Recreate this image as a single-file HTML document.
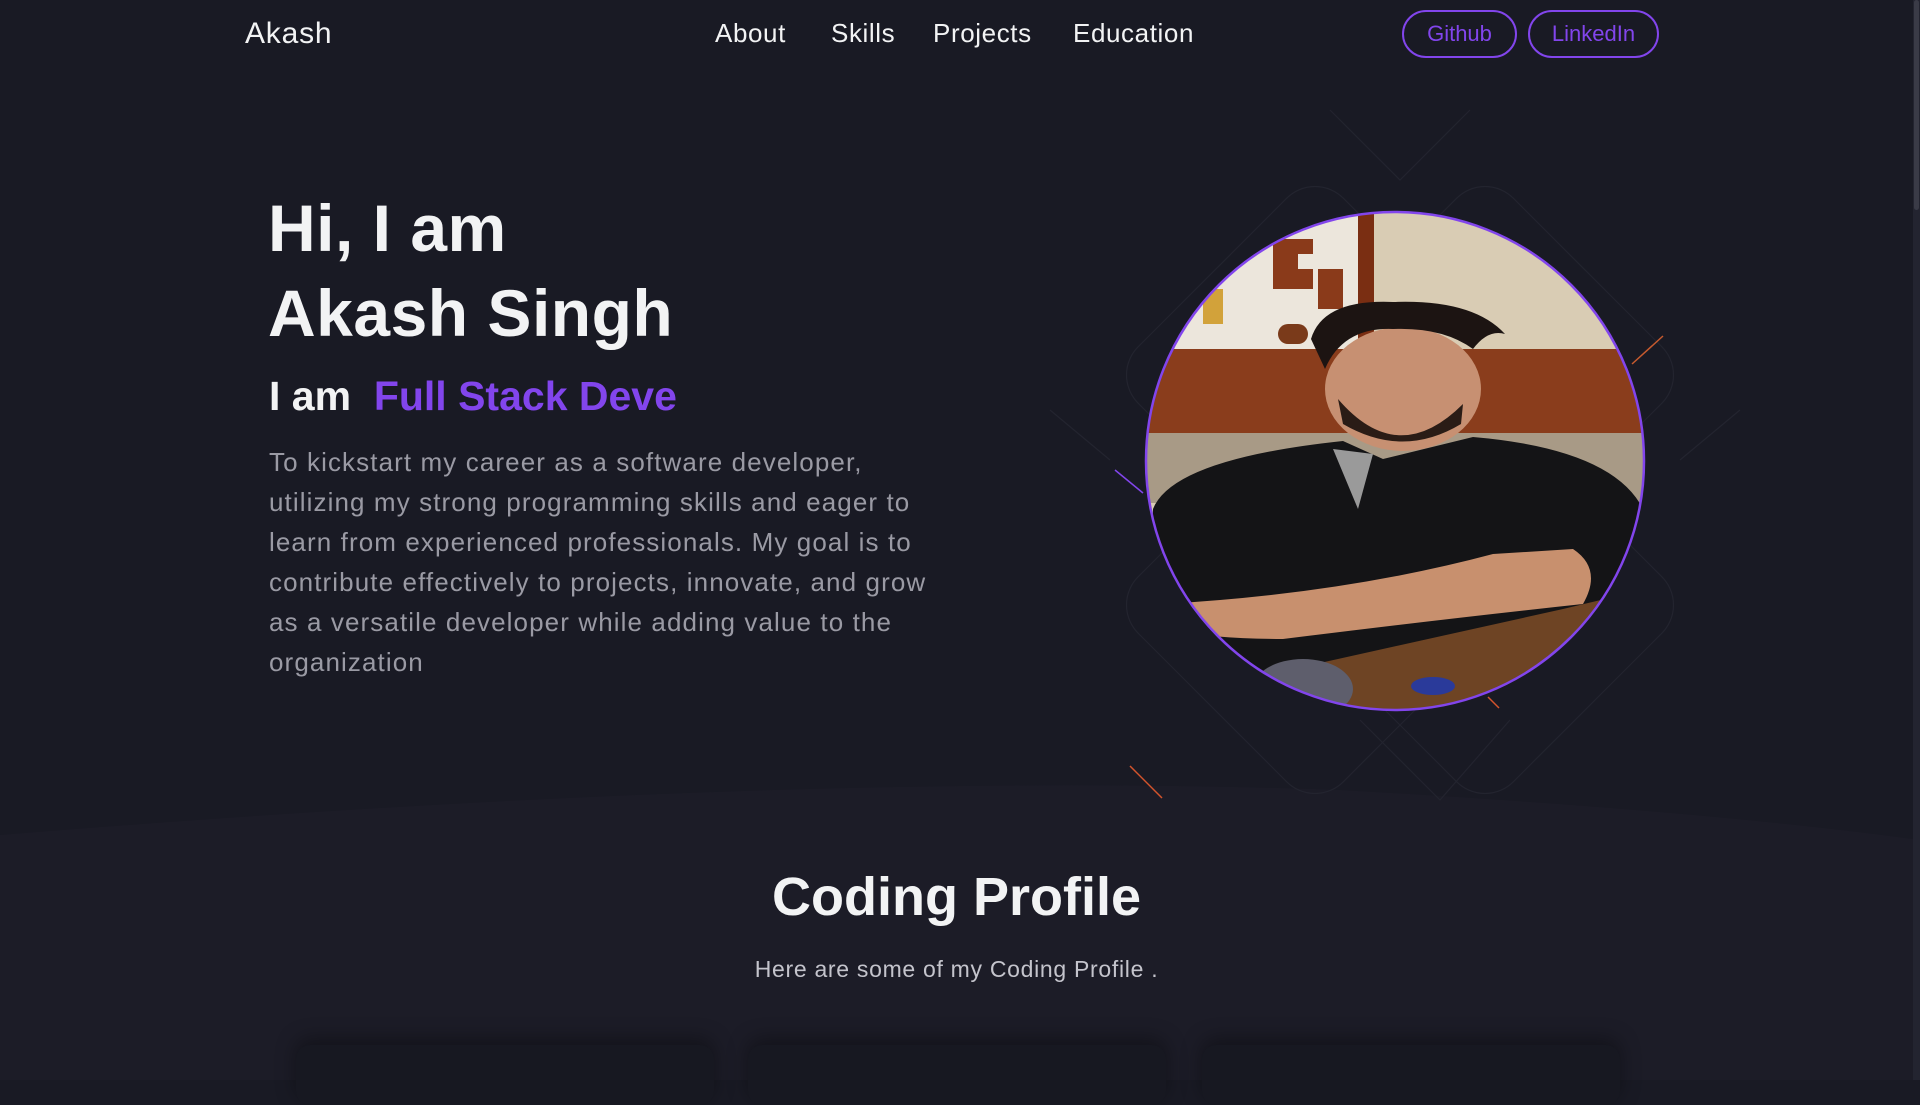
<!DOCTYPE html>
<html><head><meta charset="utf-8">
<style>
*{margin:0;padding:0;box-sizing:border-box}
html,body{width:1920px;height:1080px;overflow:hidden;background:#191a24;font-family:"Liberation Sans",sans-serif;color:#f2f3f4}
.abs{position:absolute}
.nav a{position:absolute;top:18px;font-size:26px;letter-spacing:0.6px;color:#f2f3f4;text-decoration:none;white-space:nowrap}
.btn{position:absolute;top:10px;height:48px;border:2px solid #8245ec;border-radius:24px;color:#8245ec;font-size:22px;display:flex;align-items:center;justify-content:center}
h1{position:absolute;left:268px;font-size:66px;font-weight:bold;letter-spacing:0.5px;white-space:nowrap}
.para{position:absolute;left:269px;top:442px;font-size:26px;letter-spacing:1.1px;line-height:40px;color:#9a9aa4;white-space:nowrap}
.card{position:absolute;top:1045px;height:60px;background:#171821;border-radius:14px;box-shadow:0 -6px 20px rgba(0,0,0,0.35)}
.scroll{position:absolute;right:0;top:0;width:7px;height:1080px;background:#232430}
.thumb{position:absolute;right:1px;top:0;width:5px;height:210px;background:#3a3b47;border-radius:3px}
</style></head><body>
<svg class="abs" style="left:0;top:0" width="1920" height="1080">
  <path d="M0 835 Q 800 770 1340 790 Q 1700 810 1920 840 L1920 1080 L0 1080 Z" fill="#1c1c27"/>
  <g stroke="#23242f" stroke-width="1.2" fill="none">
    <rect x="1170" y="230" width="290" height="290" rx="40" transform="rotate(45 1315 375)"/>
    <rect x="1340" y="230" width="290" height="290" rx="40" transform="rotate(45 1485 375)"/>
    <rect x="1170" y="460" width="290" height="290" rx="40" transform="rotate(45 1315 605)"/>
    <rect x="1340" y="460" width="290" height="290" rx="40" transform="rotate(45 1485 605)"/>
    <path d="M1330 110 L1400 180 L1470 110"/>
    <path d="M1050 410 L1110 460"/>
    <path d="M1740 410 L1680 460"/>
    <path d="M1360 720 L1440 800 L1510 720"/>
  </g>
  <line x1="1632" y1="364" x2="1663" y2="336" stroke="#c65a2e" stroke-width="1.5"/>
  <line x1="1130" y1="766" x2="1162" y2="798" stroke="#d4542c" stroke-width="1.5"/>
  <line x1="1115" y1="470" x2="1143" y2="493" stroke="#8245ec" stroke-width="1.5"/>
  <line x1="1488" y1="697" x2="1499" y2="708" stroke="#d4542c" stroke-width="1.5"/>
</svg>

<div class="abs" style="left:245px;top:17px;font-size:30px;letter-spacing:0.8px">Akash</div>
<div class="nav">
  <a style="left:715px">About</a>
  <a style="left:831px">Skills</a>
  <a style="left:933px">Projects</a>
  <a style="left:1073px">Education</a>
</div>
<div class="btn" style="left:1402px;width:115px">Github</div>
<div class="btn" style="left:1528px;width:131px">LinkedIn</div>

<h1 style="top:190px">Hi, I am</h1>
<h1 style="top:275px">Akash Singh</h1>
<div class="abs" style="left:269px;top:373px;font-size:41px;font-weight:bold;white-space:nowrap">I am&nbsp; <span style="color:#8245ec">Full Stack Deve</span></div>
<div class="para">To kickstart my career as a software developer,<br>utilizing my strong programming skills and eager to<br>learn from experienced professionals. My goal is to<br>contribute effectively to projects, innovate, and grow<br>as a versatile developer while adding value to the<br>organization</div>

<svg class="abs" style="left:1143px;top:209px" width="504" height="504">
  <defs><clipPath id="c"><circle cx="252" cy="252" r="249"/></clipPath></defs>
  <g clip-path="url(#c)">
    <rect width="504" height="504" fill="#d9ccb4"/>
    <rect x="0" y="0" width="230" height="145" fill="#ece6dc"/>
    <rect x="215" y="0" width="16" height="145" fill="#7a2e12"/>
    <path d="M130 30 h40 v15 h-15 v15 h15 v20 h-40 z" fill="#8a3a1a"/>
    <rect x="175" y="60" width="25" height="40" fill="#8a3a1a"/>
    <rect x="135" y="115" width="30" height="20" rx="10" fill="#7a3a1a"/>
    <rect x="60" y="80" width="20" height="35" fill="#d2a23a"/>
    <rect x="0" y="140" width="504" height="85" fill="#8a3d1c"/>
    <rect x="0" y="224" width="504" height="70" fill="#a89a86"/>
    <ellipse cx="260" cy="180" rx="78" ry="62" fill="#c79072"/>
    <path d="M168 130 Q 180 90 250 93 Q 330 90 362 125 Q 345 120 330 140 Q 300 118 250 120 Q 200 118 182 160 Z" fill="#1c1412"/>
    <path d="M195 190 Q 255 260 320 195 L 318 215 Q 260 250 200 215 Z" fill="#2a1c16"/>
    <path d="M10 300 Q 30 250 200 232 L 240 250 L 330 228 Q 470 240 500 300 L 504 504 L 0 504 Z" fill="#141416"/>
    <path d="M190 240 L 215 300 L 230 245 Z" fill="#9a9a9a"/>
    <path d="M20 395 Q 200 385 350 345 L 430 340 Q 460 360 440 395 Q 300 410 140 430 Q 70 430 20 420 Z" fill="#c8906e"/>
    <path d="M150 460 L 420 400 L 504 380 L 504 504 L 120 504 Z" fill="#6e4424"/>
    <ellipse cx="160" cy="480" rx="50" ry="30" fill="#5e5e6c"/>
    <ellipse cx="290" cy="477" rx="22" ry="9" fill="#2a3a9a"/>
  </g>
  <circle cx="252" cy="252" r="249" fill="none" stroke="#8245ec" stroke-width="2.5"/>
</svg>

<div class="abs" style="left:0;width:1913px;top:866px;text-align:center;font-size:54px;font-weight:bold">Coding Profile</div>
<div class="abs" style="left:0;width:1913px;top:956px;text-align:center;font-size:23px;letter-spacing:0.7px;color:#c4c4cc">Here are some of my Coding Profile .</div>

<div class="card" style="left:296px;width:418px"></div>
<div class="card" style="left:748px;width:418px"></div>
<div class="card" style="left:1202px;width:418px"></div>

<div class="scroll"><div class="thumb"></div></div>
</body></html>
